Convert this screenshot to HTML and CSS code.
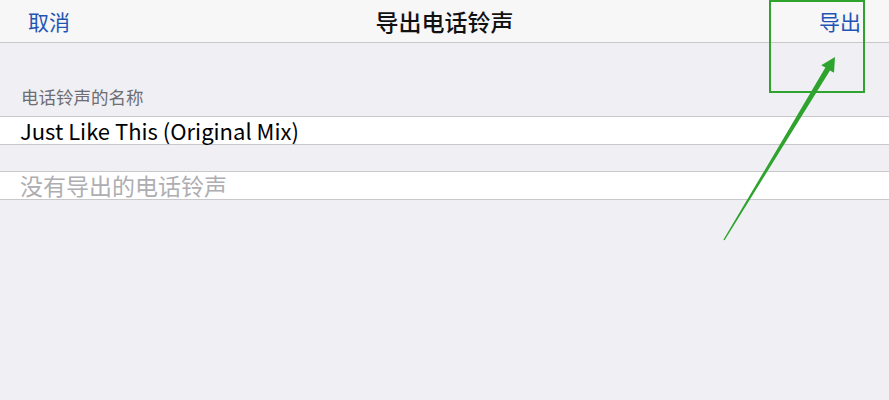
FILE: index.html
```html
<!DOCTYPE html>
<html lang="zh-CN">

<head>
    <meta charset="UTF-8">
    <meta name="viewport" content="width=device-width, initial-scale=1.0">
    <title>导出电话铃声</title>
    <link rel="stylesheet" href="styles.css">
</head>

<body>

    <!-- Navigation bar -->
    <div class="nav-bar">
        <span class="nav-btn">取消</span>
        <span class="nav-title">导出电话铃声</span>
        <span class="nav-btn">导出</span>
    </div>

    <!-- Ringtone name -->
    <div class="section-label">电话铃声的名称</div>
    <div class="cell">Just Like This (Original Mix)</div>

    <!-- Exported ringtones -->
    <div class="cell cell-empty">没有导出的电话铃声</div>

    <!-- Annotation -->
    <div class="mark-box"></div>
    <svg class="mark-arrow" width="889" height="400" viewBox="0 0 889 400">
        <polygon points="723.4,239.8 825.4,67.6 821.2,65.2 835,57 834,72.8 830,70.4 724.6,240.2" fill="#2ea32e" />
    </svg>

</body>

</html>
```

FILE: styles.css
```css
body {
    margin: 0;
    padding: 0;
    height: 400px;
    background-color: #efeff4;
    font-family: "Noto Sans CJK SC", "Noto Sans", sans-serif;
    position: relative;
    overflow: hidden;
}

.nav-bar {
    height: 42px;
    display: flex;
    align-items: center;
    justify-content: space-between;
    padding: 0 28px;
    background-color: #f7f7f8;
    border-bottom: 1px solid #c8c8cc;
}

.nav-btn {
    font-size: 21px;
    color: #1f56b5;
}

.nav-title {
    font-size: 23px;
    font-weight: 500;
    color: #111;
}

.section-label {
    margin-top: 43px;
    padding-left: 21px;
    height: 30px;
    font-size: 17.5px;
    line-height: 22px;
    color: #6d6d72;
}

.cell {
    height: 27px;
    line-height: 26px;
    padding-left: 20px;
    font-size: 22px;
    color: #000;
    background-color: #fff;
    border-top: 1px solid #c8c7cc;
    border-bottom: 1px solid #c8c7cc;
}

.cell-empty {
    margin-top: 26px;
    color: #aeaeb2;
    font-size: 23px;
}

.mark-box {
    position: absolute;
    left: 769px;
    top: 0;
    width: 92px;
    height: 89px;
    border: 2px solid #2ea32e;
}

.mark-arrow {
    position: absolute;
    left: 0;
    top: 0;
}
```
